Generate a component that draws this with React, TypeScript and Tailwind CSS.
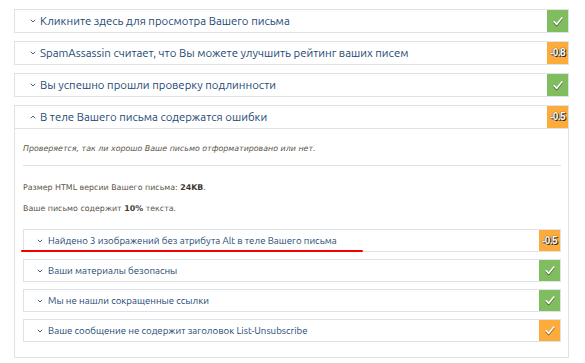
import React from "react";

const Chevron = ({ up = false }: { up?: boolean }) => (
  <svg width="6" height="4" viewBox="0 0 6 4" className="shrink-0">
    <polyline
      points={up ? "0.8,3.3 3,1 5.2,3.3" : "0.8,0.8 3,3 5.2,0.8"}
      fill="none"
      stroke="#3d6a92"
      strokeWidth="1"
    />
  </svg>
);

const Check = () => (
  <svg width="10" height="9" viewBox="0 0 10 9" style={{ filter: "drop-shadow(0 1px 0 rgba(0,0,0,0.55))" }}>
    <path d="M1.2 4.8 L3.6 7.4 L8.8 1" fill="none" stroke="#fff" strokeWidth="1.6" strokeLinecap="round" strokeLinejoin="round" />
  </svg>
);

type BadgeKind = "ok" | "warnok" | string;

const Badge = ({ kind }: { kind: BadgeKind }) => {
  const green = kind === "ok";
  const isCheck = kind === "ok" || kind === "warnok";
  return (
    <div
      className={
        "flex items-center justify-center self-stretch shrink-0 w-[21px] overflow-hidden " +
        (green ? "bg-[#80bd5f]" : "bg-[#fdab3b]")
      }
    >
      {isCheck ? (
        <Check />
      ) : (
        <span
          className="text-[10px] font-bold text-white leading-none tracking-[-0.6px]"
          style={{ textShadow: "0 0 1px #000, 1px 1px 0 #333", fontFamily: "'Liberation Sans', Arial, sans-serif" }}
        >
          {kind}
        </span>
      )}
    </div>
  );
};

const OuterRow = ({ title, badge }: { title: string; badge: BadgeKind }) => (
  <div className="flex h-[24px] w-[555px] border border-[#dde3e9] bg-white">
    <div className="flex flex-1 items-center gap-[4px] pl-[15px] text-[11.4px] text-[#1d4a75]">
      <Chevron />
      <span className="leading-none">{title}</span>
    </div>
    <Badge kind={badge} />
  </div>
);

const InnerRow = ({ title, badge }: { title: string; badge: BadgeKind }) => (
  <div className="flex h-[23px] w-[538px] border border-[#dde3e9] bg-white">
    <div className="flex flex-1 items-center gap-[5px] pl-[13px] text-[9.7px] text-[#1d4a75]">
      <Chevron />
      <span className="leading-none">{title}</span>
    </div>
    <Badge kind={badge} />
  </div>
);

export default function App() {
  return (
    <div
      className="w-[585px] h-[363px] bg-white overflow-hidden pl-[14px] pt-[9px] flex flex-col gap-[8px]"
      style={{ fontFamily: "Ubuntu, 'Noto Sans', 'Open Sans', sans-serif" }}
    >
      <OuterRow title="Кликните здесь для просмотра Вашего письма" badge="ok" />
      <OuterRow title="SpamAssassin считает, что Вы можете улучшить рейтинг ваших писем" badge="-0.8" />
      <OuterRow title="Вы успешно прошли проверку подлинности" badge="ok" />
      <div className="w-[555px] border border-[#dde3e9] bg-white flex flex-col">
        <div className="flex h-[23px] border-b border-[#dde3e9]">
          <div className="flex flex-1 items-center gap-[4px] pl-[15px] text-[11.4px] text-[#1d4a75]">
            <Chevron up />
            <span className="leading-none">В теле Вашего письма содержатся ошибки</span>
          </div>
          <Badge kind="-0.5" />
        </div>
        <div
          className="flex flex-col pl-[8px] pr-[7px] pt-[15px] pb-[15px] text-[7.9px] text-[#5b5347]"
          style={{ fontFamily: "'DejaVu Sans', Verdana, sans-serif" }}
        >
          <div className="h-[10px] leading-[10px] italic">
            Проверяется, так ли хорошо Ваше письмо отформатировано или нет.
          </div>
          <div className="mt-[11px] h-px bg-[#dde3e9] w-[538px]" />
          <div className="mt-[17px] h-[10px] leading-[10px]">
            Размер HTML версии Вашего письма: <b className="text-[#3f3a33]">24KB</b>.
          </div>
          <div className="mt-[11px] h-[10px] leading-[10px]">
            Ваше письмо содержит <b className="text-[#3f3a33]">10%</b> текста.
          </div>
          <div
            className="mt-[15px] flex flex-col gap-[7px] relative"
            style={{ fontFamily: "Ubuntu, 'Noto Sans', 'Open Sans', sans-serif" }}
          >
            <InnerRow title="Найдено 3 изображений без атрибута Alt в теле Вашего письма" badge="-0.5" />
            <InnerRow title="Ваши материалы безопасны" badge="ok" />
            <InnerRow title="Мы не нашли сокращенные ссылки" badge="ok" />
            <InnerRow title="Ваше сообщение не содержит заголовок List-Unsubscribe" badge="warnok" />
            <div className="absolute left-[-2px] top-[21px] w-[342px] h-[2px] bg-[#f50000] rounded-full" />
          </div>
        </div>
      </div>
    </div>
  );
}
